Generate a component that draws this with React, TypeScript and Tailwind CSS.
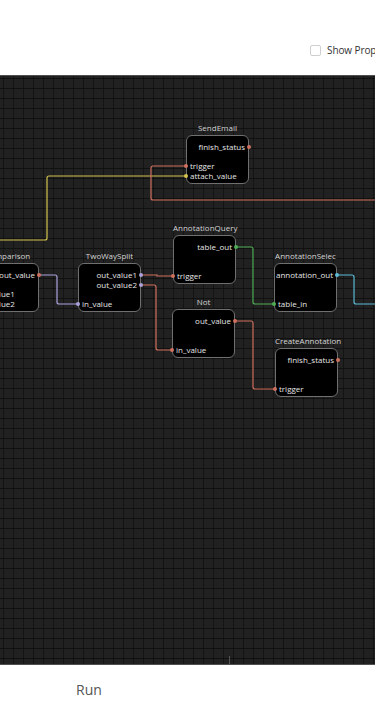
import React from "react"

type Port = { name: string; color: string }
type NodeProps = { pos: string; title: string; outputs: Port[]; inputs: Port[] }

const SALMON = "#d0705f"
const YELLOW = "#d2c24c"
const LAVENDER = "#aaa2dc"
const GREEN = "#4fae55"
const CYAN = "#5cbcd6"

function Dot({ color, side }: { color: string; side: "left" | "right" }) {
  return (
    <span
      className={
        "absolute top-[3px] w-[4px] h-[4px] rounded-full " +
        (side === "left" ? "left-[-3px]" : "right-[-3px]")
      }
      style={{ backgroundColor: color }}
    />
  )
}

function FlowNode({ pos, title, outputs, inputs }: NodeProps) {
  return (
    <div className={"absolute w-[63px] " + pos}>
      <div className="h-[10px] mb-[2px] text-[8px] leading-[10px] text-center text-[#d4d4d4] whitespace-nowrap">{title}</div>
      <div className="relative h-[49px] rounded-[6px] border border-[#6f6f6f] bg-black pt-[6px] pb-[2px] flex flex-col">
        {outputs.map((p) => (
          <div key={p.name} className="relative h-[10px] pr-[3px] text-right text-[8px] leading-[10px] text-[#e6e6e6] whitespace-nowrap">
            {p.name}
            <Dot color={p.color} side="right" />
          </div>
        ))}
        <div className="flex-1" />
        {inputs.map((p) => (
          <div key={p.name} className="relative h-[10px] pl-[3px] text-left text-[8px] leading-[10px] text-[#e6e6e6] whitespace-nowrap">
            {p.name}
            <Dot color={p.color} side="left" />
          </div>
        ))}
      </div>
    </div>
  )
}

function Edges() {
  // canvas coordinates (page y - 75)
  return (
    <svg className="absolute inset-0" width="375" height="590" viewBox="0 0 375 590" fill="none" strokeWidth="1.2">
      <defs>
        <pattern id="grid" width="10" height="10" patternUnits="userSpaceOnUse" x="3" y="2">
          <path d="M10 0H0V10" stroke="#0c0c0c" strokeWidth="1.3" />
        </pattern>
      </defs>
      <rect width="375" height="590" fill="url(#grid)" />
      <path d="M-10 164H45Q47 164 47 162V102Q47 100 49 100H186" stroke={YELLOW} />
      <path d="M186 90H153Q151 90 151 92V122Q151 124 153 124H400" stroke={SALMON} />
      <path d="M39 199H55Q57 199 57 201V226Q57 228 59 228H79" stroke={LAVENDER} />
      <path d="M141 199H157V200H173" stroke={SALMON} />
      <path d="M141 209H154Q156 209 156 211V272Q156 274 158 274H172" stroke={SALMON} />
      <path d="M236 171H251Q253 171 253 173V226Q253 228 255 228H274" stroke={GREEN} />
      <path d="M234 245H251Q253 245 253 247V311Q253 313 255 313H275" stroke={SALMON} />
      <path d="M337 199H352Q354 199 354 201V226Q354 228 356 228H400" stroke={CYAN} />
    </svg>
  )
}

export default function App() {
  return (
    <div className="w-[375px] h-[713px] overflow-hidden bg-white font-['Open_Sans',sans-serif]">
      <div className="h-[75px] flex items-end pb-[19px] pl-[310px]">
        <div className="flex items-center gap-[6px] whitespace-nowrap">
          <span className="w-[11px] h-[11px] border border-[#cfcfcf] rounded-[2px] bg-white" />
          <span className="text-[10px] leading-[12px] text-[#333] tracking-[-0.1px]">Show Properties</span>
        </div>
      </div>
      <div className="relative h-[590px] bg-[#212121] border-t border-b border-[#505050] overflow-hidden">
        <Edges />
        <FlowNode
          pos="left-[186px] top-[47px]"
          title="SendEmail"
          outputs={[{ name: "finish_status", color: SALMON }]}
          inputs={[{ name: "trigger", color: SALMON }, { name: "attach_value", color: YELLOW }]}
        />
        <FlowNode
          pos="left-[-24px] top-[175px]"
          title="Comparison"
          outputs={[{ name: "out_value", color: SALMON }]}
          inputs={[{ name: "in_value1", color: LAVENDER }, { name: "in_value2", color: LAVENDER }]}
        />
        <FlowNode
          pos="left-[78px] top-[175px]"
          title="TwoWaySplit"
          outputs={[{ name: "out_value1", color: LAVENDER }, { name: "out_value2", color: LAVENDER }]}
          inputs={[{ name: "in_value", color: LAVENDER }]}
        />
        <FlowNode
          pos="left-[173px] top-[147px]"
          title="AnnotationQuery"
          outputs={[{ name: "table_out", color: GREEN }]}
          inputs={[{ name: "trigger", color: SALMON }]}
        />
        <FlowNode
          pos="left-[172px] top-[221px]"
          title="Not"
          outputs={[{ name: "out_value", color: SALMON }]}
          inputs={[{ name: "in_value", color: SALMON }]}
        />
        <FlowNode
          pos="left-[274px] top-[175px]"
          title="AnnotationSelec"
          outputs={[{ name: "annotation_out", color: CYAN }]}
          inputs={[{ name: "table_in", color: GREEN }]}
        />
        <FlowNode
          pos="left-[275px] top-[260px]"
          title="CreateAnnotation"
          outputs={[{ name: "finish_status", color: SALMON }]}
          inputs={[{ name: "trigger", color: SALMON }]}
        />
        <div className="absolute left-[229px] bottom-0 w-px h-[8px] bg-[#555]" />
      </div>
      <div className="pl-[76px] pt-[16px] text-[14px] leading-[18px] text-[#555]">Run</div>
    </div>
  )
}
